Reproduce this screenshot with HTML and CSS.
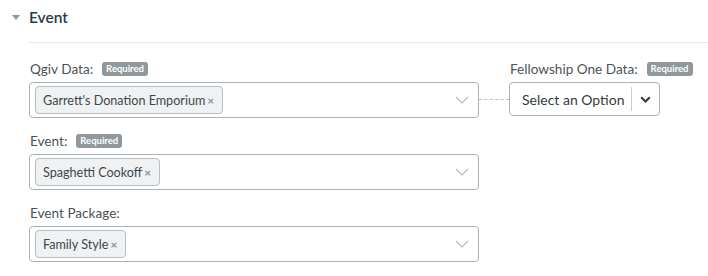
FILE: index.html
```html
<!DOCTYPE html>
<html lang="en">
  <head>
    <meta charset="UTF-8" />
    <title>Event Mapping</title>
    <link rel="stylesheet" href="styles.css">
  </head>
  <body>
    <div class="section">
      <div class="section-head">
        <span class="caret"></span>
        <h2>Event</h2>
      </div>
      <div class="section-line"></div>

      <div class="fields">
        <!-- Qgiv Data -> Fellowship One Data -->
        <div class="row">
          <div class="field">
            <div class="label">Qgiv Data: <span class="badge">Required</span></div>
            <div class="multi">
              <span class="tag">Garrett's Donation Emporium <span class="x">&times;</span></span>
              <svg class="chev" width="14" height="8" viewBox="0 0 14 8"><path d="M1 1l6 6 6-6" fill="none" stroke="#b3bcc0" stroke-width="1.2"/></svg>
            </div>
          </div>
          <div class="link"></div>
          <div class="field field-side">
            <div class="label">Fellowship One Data: <span class="badge">Required</span></div>
            <div class="select">
              <span class="select-text">Select an Option</span>
              <span class="select-btn">
                <svg width="11" height="7" viewBox="0 0 11 7"><path d="M1.2 1.2l4.3 4.3 4.3-4.3" fill="none" stroke="#2f3a40" stroke-width="2"/></svg>
              </span>
            </div>
          </div>
        </div>

        <div class="row">
          <div class="field">
            <div class="label">Event: <span class="badge">Required</span></div>
            <div class="multi">
              <span class="tag">Spaghetti Cookoff <span class="x">&times;</span></span>
              <svg class="chev" width="14" height="8" viewBox="0 0 14 8"><path d="M1 1l6 6 6-6" fill="none" stroke="#b3bcc0" stroke-width="1.2"/></svg>
            </div>
          </div>
        </div>

        <div class="row">
          <div class="field">
            <div class="label">Event Package:</div>
            <div class="multi">
              <span class="tag">Family Style <span class="x">&times;</span></span>
              <svg class="chev" width="14" height="8" viewBox="0 0 14 8"><path d="M1 1l6 6 6-6" fill="none" stroke="#b3bcc0" stroke-width="1.2"/></svg>
            </div>
          </div>
        </div>
      </div>
    </div>
  </body>
</html>
```

FILE: styles.css
```css
:root {
  --text: #2c3a43;
  --label: #4b5358;
  --border: #a9b4b9;
  --tag-bg: #eff1f2;
  --tag-border: #b5bec2;
  --badge: #8e989d;
  --line: #e7eaeb;
}

body {
  margin: 0;
  font-family: Lato, "Open Sans", Arial, sans-serif;
  background: #fff;
  color: var(--text);
}

.section-head {
  display: flex;
  align-items: center;
  padding: 7px 0 0 12px;
  height: 20px;
}

.caret {
  width: 0;
  height: 0;
  border-left: 4.5px solid transparent;
  border-right: 4.5px solid transparent;
  border-top: 5px solid #8f989c;
  margin-right: 9px;
}

h2 {
  margin: 0;
  font-size: 15.5px;
  font-weight: 600;
  line-height: 20px;
}

.section-line {
  margin: 15px 0 0 28px;
  border-top: 1px solid var(--line);
}

.fields {
  padding: 17px 0 0 29px;
  display: flex;
  flex-direction: column;
  gap: 14px;
}

.row {
  display: flex;
  align-items: flex-end;
}

.field {
  width: 450px;
}

.field-side {
  width: auto;
}

.label {
  display: flex;
  align-items: center;
  font-size: 13.6px;
  color: var(--label);
  height: 18px;
  margin-bottom: 4px;
  padding-left: 1px;
}

.badge {
  display: inline-block;
  background: var(--badge);
  color: #fff;
  font-size: 9.5px;
  font-weight: 700;
  line-height: 14px;
  padding: 0 4px;
  border-radius: 3px;
  margin-left: 9px;
}

.multi {
  box-sizing: border-box;
  height: 36px;
  border: 1px solid var(--border);
  border-radius: 4px;
  display: flex;
  align-items: center;
  padding: 0 9px 0 5px;
}

.tag {
  box-sizing: border-box;
  height: 28px;
  display: inline-flex;
  align-items: center;
  padding: 0 8px 0 7px;
  background: var(--tag-bg);
  border: 1px solid var(--tag-border);
  border-radius: 4px;
  font-size: 12.6px;
  color: #3e474c;
}

.x {
  color: #8a9398;
  font-size: 12px;
  font-weight: 700;
  margin-left: 2px;
}

.chev {
  margin-left: auto;
}

.link {
  width: 30px;
  border-top: 1px dashed #b8c0c4;
  margin-bottom: 18px;
}

.select {
  box-sizing: border-box;
  width: 151px;
  height: 34px;
  border: 1px solid var(--border);
  border-radius: 4px;
  display: flex;
  align-items: center;
  margin-bottom: 2px;
}

.select-text {
  flex: 1;
  font-size: 14px;
  color: #333b40;
  padding-left: 12px;
}

.select-btn {
  display: flex;
  align-items: center;
  justify-content: center;
  width: 27px;
  height: 24px;
  border-left: 1px solid #c8cfd2;
}
```
